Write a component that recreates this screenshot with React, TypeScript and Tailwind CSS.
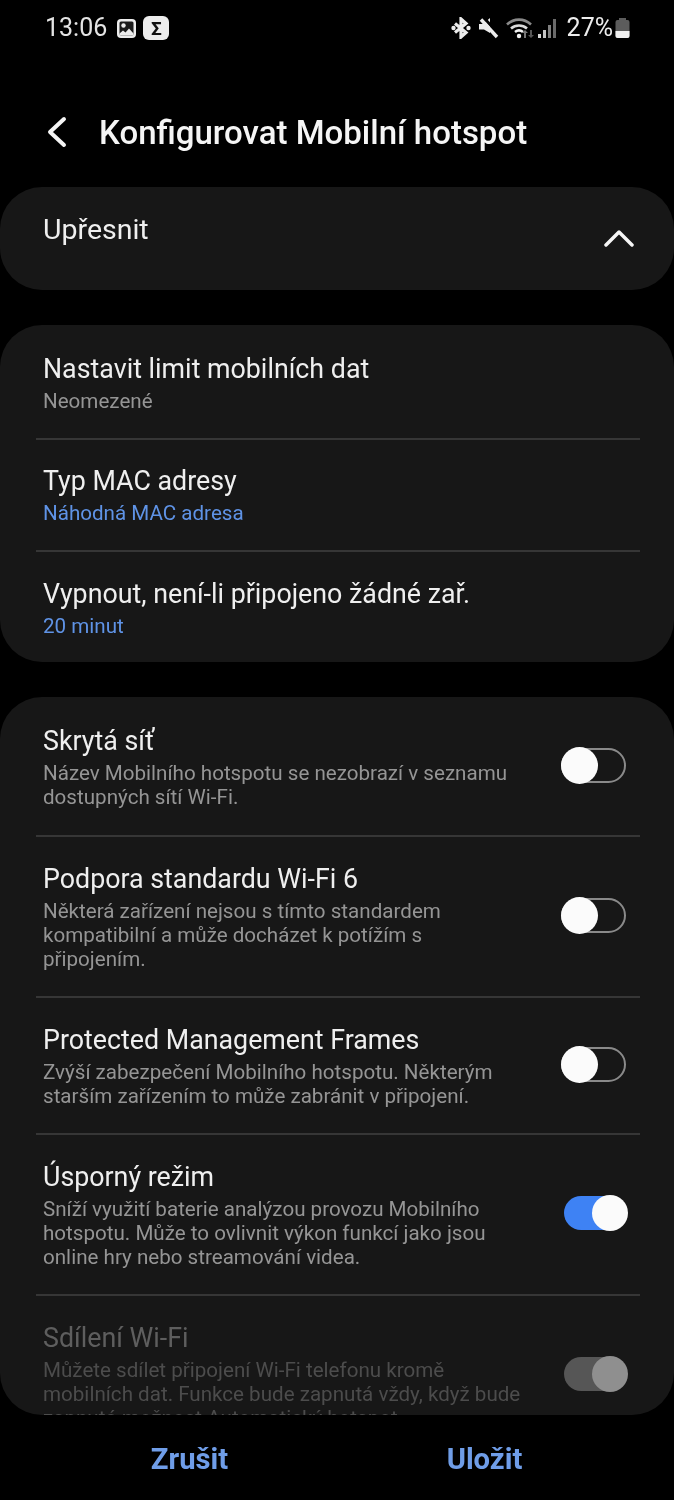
const font = { fontFamily: 'Roboto, sans-serif' }

function Toggle({ state }: { state: 'off' | 'on' | 'disabled' }) {
  if (state === 'off') {
    return (
      <div className="relative mb-[4px] h-[35px] w-[65px] shrink-0 rounded-full border-2 border-[#8a8a8a]">
        <div className="absolute top-[-3px] left-[-2px] h-[37px] w-[37px] rounded-full bg-[#fbfbfb]" />
      </div>
    )
  }
  return (
    <div className={`relative mb-[6px] h-[34px] w-[62px] shrink-0 rounded-full ${state === 'on' ? 'bg-[#3e82f4]' : 'bg-[#565656]'}`}>
      <div className={`absolute top-[-1px] right-[-2px] h-[36px] w-[36px] rounded-full ${state === 'on' ? 'bg-[#fbfbfb]' : 'bg-[#8f8f8f]'}`} />
    </div>
  )
}

type RowProps = {
  title: string
  lines: string[]
  subClass?: string
  titleClass?: string
  toggle?: 'off' | 'on' | 'disabled'
  pad?: string
  last?: boolean
}

function Row({ title, lines, subClass = 'text-[#959595]', titleClass = 'text-[#efefef]', toggle, pad = 'pt-[27px] pb-[25px]', last }: RowProps) {
  return (
    <div className={`mr-[34px] ml-9 flex items-center justify-between ${last ? '' : 'border-b-2 border-[#363636]'} ${pad}`}>
      <div className="pl-[7px]">
        <div className={`h-[30px] text-[26.8px] leading-[30px] whitespace-nowrap ${titleClass}`}>{title}</div>
        <div className="mt-[5px]">
          {lines.map((line) => (
            <div key={line} className={`h-[24px] text-[20.6px] leading-[24px] whitespace-nowrap ${subClass}`}>
              {line}
            </div>
          ))}
        </div>
      </div>
      {toggle && <div className="mr-[14px]"><Toggle state={toggle} /></div>}
    </div>
  )
}

function StatusIcons() {
  return (
    <div className="flex items-center text-[#ececec]">
      <svg width="20" height="22" viewBox="0 0 20 22" fill="none" stroke="currentColor" strokeWidth="3.2" className="mr-[7px] ml-[-4px]">
        <path d="M4 6.500 15 15.500 10 20V2l5 4.500L4 15.500" />
        <circle cx="2.500" cy="11" r="2.200" fill="currentColor" stroke="none" />
        <circle cx="17.500" cy="11" r="2.200" fill="currentColor" stroke="none" />
      </svg>
      <svg width="22" height="22" viewBox="0 0 22 22" className="mr-[6px]">
        <path d="M1 7h4l7-6v15L6 12.500H1z" fill="currentColor" />
        <path d="M6 1l15 16.500" stroke="#000" strokeWidth="3" />
        <path d="M3 2.500l16 17.500" stroke="currentColor" strokeWidth="3.400" />
      </svg>
      <svg width="30" height="24" viewBox="0 0 30 24" fill="none" className="mr-[2px]">
        <path d="M1 8.500c7-6.500 17-6.500 24 0" stroke="#8a8a8a" strokeWidth="2.600" />
        <path d="M5 12.500c4.500-4 11.500-4 16 0" stroke="#dcdcdc" strokeWidth="2.600" />
        <path d="M9 16c2.500-2 5.500-2 8 0" stroke="#f2f2f2" strokeWidth="2.600" />
        <circle cx="13" cy="20" r="2.200" fill="#f2f2f2" />
        <path d="M18 22v-5h-2l3-3 3 3h-2v5z" fill="#777" />
        <path d="M24 14v5h-2l3 3 3-3h-2v-5z" fill="#555" />
      </svg>
      <svg width="20" height="22" viewBox="0 0 20 22" className="mr-[9px]">
        <rect x="0" y="17" width="3" height="4" fill="#d8d8d8" />
        <rect x="5" y="13" width="3" height="8" fill="#c4c4c4" />
        <rect x="10" y="8" width="3" height="13" fill="#808080" />
        <rect x="15" y="2" width="3" height="19" fill="#6a6a6a" />
      </svg>
      <span className="text-[25px] leading-[30px]">27%</span>
      <svg width="15" height="20" viewBox="0 0 15 20" className="ml-[2px]">
        <path d="M4 0h7v2h1.500A2 2 0 0 1 14.500 4v14a2 2 0 0 1-2 2h-10a2 2 0 0 1-2-2V4a2 2 0 0 1 2-2H4z" fill="#5c5c5c" />
        <path d="M.5 13h14v5a2 2 0 0 1-2 2h-10a2 2 0 0 1-2-2z" fill="#f0f0f0" />
      </svg>
    </div>
  )
}

export default function App() {
  return (
    <div style={font} className="flex h-[1500px] w-[674px] flex-col overflow-hidden bg-black blur-[0.5px]">
      {/* status bar */}
      <div className="flex h-[56px] items-center justify-between pr-[44px] pl-[45px]">
        <div className="flex items-center">
          <span className="text-[25px] leading-[30px] text-[#e4e4e4]">13:06</span>
          <svg width="19" height="19" viewBox="0 0 19 19" className="ml-[10px]">
            <rect width="19" height="19" rx="4" fill="#ededed" />
            <rect x="2.500" y="2.500" width="14" height="14" rx="1.500" fill="#1c1c1c" />
            <circle cx="6.500" cy="6.500" r="2.200" fill="#ededed" />
            <path d="M2.500 16.500v-2l3.500-3 2.500 2 3.500-4 4.500 5v2z" fill="#ededed" />
          </svg>
          <div className="ml-[7px] flex h-[24px] w-[26px] items-center justify-center rounded-[6px] bg-[#ededed] text-[19px] leading-none font-bold text-[#111]">
            Σ
          </div>
        </div>
        <StatusIcons />
      </div>

      {/* header */}
      <div className="flex h-[131px] shrink-0 items-start pt-[58px] pl-[47px]">
        <svg width="20" height="32" viewBox="0 0 20 32" fill="none" stroke="#f5f5f5" strokeWidth="4" strokeLinecap="round" strokeLinejoin="round" className="mt-[2px]">
          <path d="M17 3 3 16l14 13" />
        </svg>
        <h1 className="ml-[32px] text-[33px] leading-[38px] font-medium whitespace-nowrap text-[#f5f5f5]">Konfigurovat Mobilní hotspot</h1>
      </div>

      {/* main */}
      <div className="flex h-[103px] shrink-0 items-start justify-between rounded-[42px] bg-[#171717] pt-[28px] pr-[39px] pb-[35px] pl-[43px]">
        <span className="text-[28.5px] leading-[30px] text-[#efefef]">Upřesnit</span>
        <svg width="32" height="20" viewBox="0 0 32 20" fill="none" stroke="#f5f5f5" strokeWidth="3.500" strokeLinecap="round" strokeLinejoin="round" className="mt-[12px]">
          <path d="M3 18 16 5l13 13" />
        </svg>
      </div>

      <div className="mt-[35px] h-[337px] shrink-0 rounded-[42px] bg-[#171717]">
        <Row pad="pt-[29px] pb-[25px]" title="Nastavit limit mobilních dat" lines={['Neomezené']} />
        <Row pad="pt-[26px] pb-[25px]" title="Typ MAC adresy" lines={['Náhodná MAC adresa']} subClass="text-[#5f93e6]" />
        <Row last pad="pt-[27px] pb-[25px]" title="Vypnout, není-li připojeno žádné zař." lines={['20 minut']} subClass="text-[#5f93e6]" />
      </div>

      <div className="mt-[35px] h-[718px] shrink-0 overflow-hidden rounded-[42px] bg-[#171717]">
        <Row
          pad="pt-[29px] pb-[26px]"
          title="Skrytá síť"
          lines={['Název Mobilního hotspotu se nezobrazí v seznamu', 'dostupných sítí Wi-Fi.']}
          toggle="off"
        />
        <Row
          title="Podpora standardu Wi-Fi 6"
          lines={['Některá zařízení nejsou s tímto standardem', 'kompatibilní a může docházet k potížím s', 'připojením.']}
          toggle="off"
        />
        <Row
          title="Protected Management Frames"
          lines={['Zvýší zabezpečení Mobilního hotspotu. Některým', 'starším zařízením to může zabránit v připojení.']}
          toggle="off"
        />
        <Row
          title="Úsporný režim"
          lines={['Sníží využití baterie analýzou provozu Mobilního', 'hotspotu. Může to ovlivnit výkon funkcí jako jsou', 'online hry nebo streamování videa.']}
          toggle="on"
        />
        <Row
          last
          title="Sdílení Wi-Fi"
          titleClass="text-[#5e5e5e]"
          subClass="text-[#4c4c4c]"
          lines={['Můžete sdílet připojení Wi-Fi telefonu kromě', 'mobilních dat. Funkce bude zapnutá vždy, když bude', 'zapnutá možnost Automatický hotspot.']}
          toggle="disabled"
        />
      </div>

      {/* bottom actions */}
      <div className="grid flex-1 grid-cols-2 items-start px-[42px] pt-[26px]">
        <button className="text-center text-[29.2px] leading-[36px] font-bold text-[#6f9de8]">Zrušit</button>
        <button className="text-center text-[29.2px] leading-[36px] font-bold text-[#6f9de8]">Uložit</button>
      </div>
    </div>
  )
}
